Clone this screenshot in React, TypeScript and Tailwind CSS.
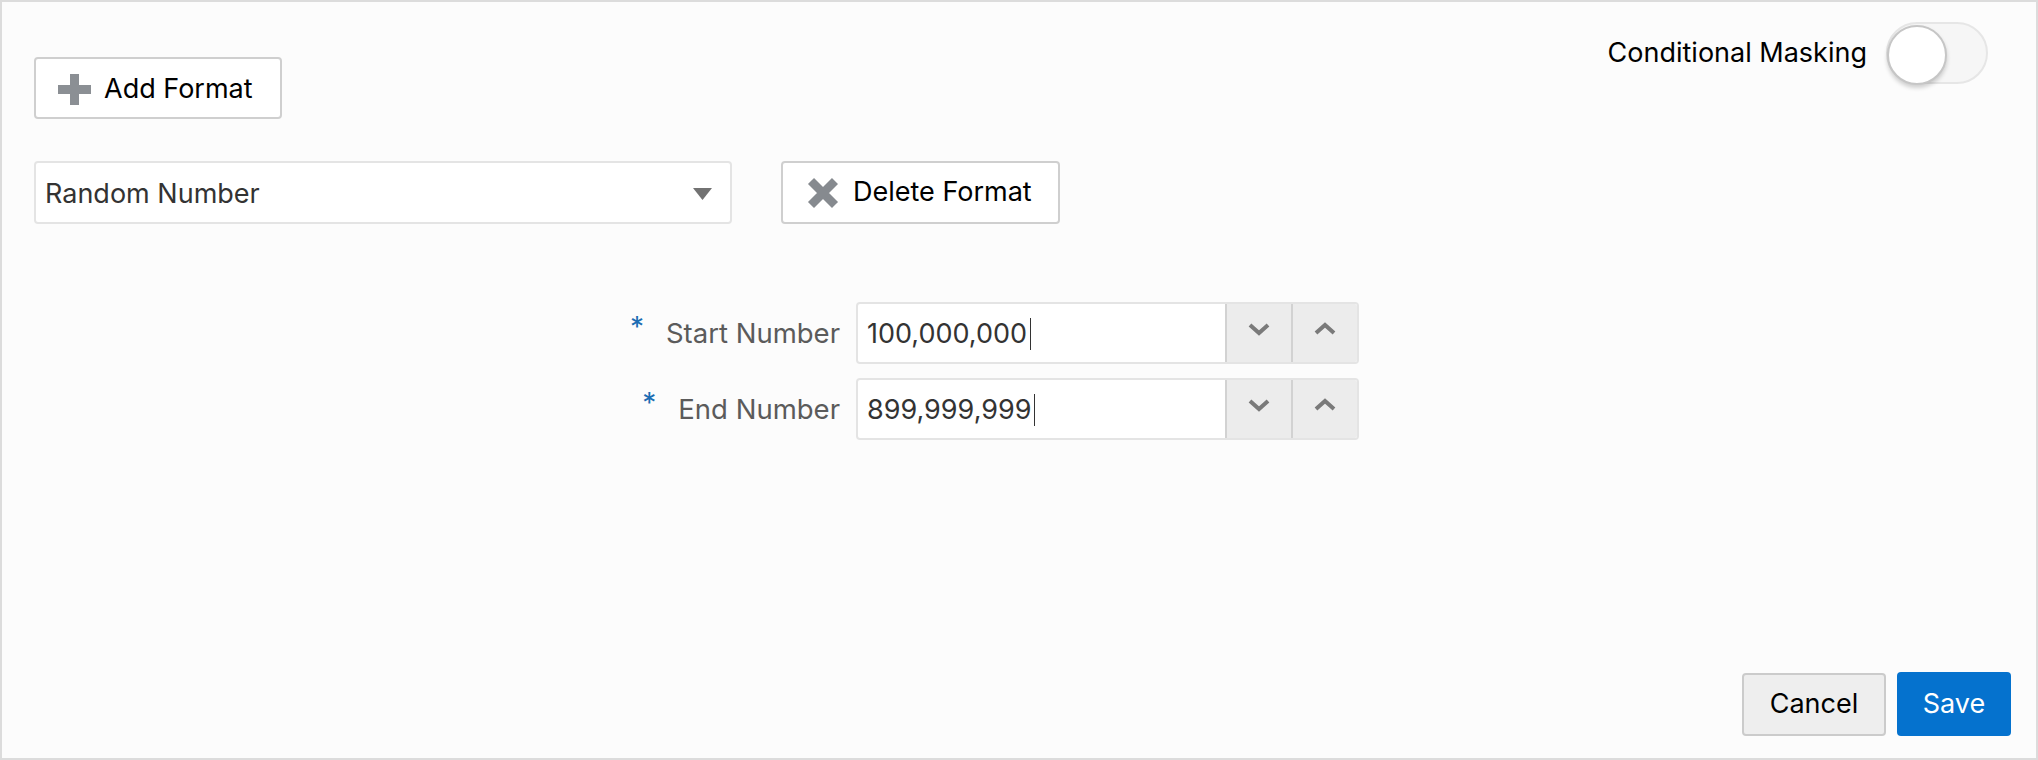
import React from 'react';

const font = "font-['Inter','Liberation_Sans',sans-serif]";

function PlusIcon() {
    return (
        <svg width="33" height="31" viewBox="0 0 33 31" className="shrink-0">
            <rect x="12" y="0" width="9" height="31" fill="#8b8f94" />
            <rect x="0" y="11" width="33" height="9" fill="#8b8f94" />
        </svg>
    );
}

function CrossIcon() {
    return (
        <svg width="32" height="32" viewBox="0 0 32 32" className="shrink-0">
            <path d="M4 4 L28 28 M28 4 L4 28" stroke="#868a8f" strokeWidth="8.5" />
        </svg>
    );
}

function Chevron({ up }: { up?: boolean }) {
    return (
        <svg width="22" height="13" viewBox="0 0 22 13">
            <polyline
                points={up ? '2,11 11,3 20,11' : '2,2 11,10 20,2'}
                fill="none"
                stroke="#7a7a7a"
                strokeWidth="4"
            />
        </svg>
    );
}

function NumberField({ label, value }: { label: string; value: string }) {
    return (
        <div className="flex items-center">
            <div className="w-[854px] flex items-baseline justify-end pr-[16px]">
                <span className="text-[28px] text-[#1c6db3] relative -top-[6px] mr-[22px]">*</span>
                <span className="text-[27.5px] text-[#5b5b5b]">{label}</span>
            </div>
            <div className="w-[503px] h-[62px] flex border-2 border-[#e4e4e4] rounded-[4px] bg-white overflow-hidden">
                <div className="flex-1 flex items-center pl-[9px] pt-[2px] text-[27px] text-[#333333]">
                    <span>{value}</span>
                    <span className="ml-[3px] w-px h-[32px] bg-[#333333]" />
                </div>
                <div className="w-[66px] flex items-center justify-center bg-[#ececec] border-l-2 border-[#d2d2d2] pb-[8px]">
                    <Chevron />
                </div>
                <div className="w-[66px] flex items-center justify-center bg-[#ececec] border-l-2 border-[#d2d2d2] pb-[10px]">
                    <Chevron up />
                </div>
            </div>
        </div>
    );
}

export default function App() {
    return (
        <div className={`w-[2038px] h-[760px] border-2 border-[#dcdcdc] bg-[#fcfcfc] flex flex-col ${font}`}>
            {/* Top row */}
            <div className="flex justify-between items-start pl-[32px] pr-[48px] pt-[20px]">
                <button className="mt-[35px] w-[248px] h-[62px] flex items-center gap-[13px] pl-[22px] pt-[2px] bg-white border-2 border-[#cfcfcf] rounded-[4px] text-[27px] text-black">
                    <PlusIcon />
                    <span>Add Format</span>
                </button>
                <div className="flex items-center gap-[19px]">
                    <span className="text-[27px] text-black">Conditional Masking</span>
                    <div className="relative w-[102px] h-[62px] rounded-full border-2 border-[#e6e6e6] bg-[#f6f6f6]">
                        <div className="absolute left-[-1px] top-[1px] w-[60px] h-[60px] rounded-full bg-white border-2 border-[#c6c6c6] shadow-[0_3px_4px_rgba(0,0,0,0.18)]" />
                    </div>
                </div>
            </div>

            {/* Format select row */}
            <div className="flex items-center gap-[49px] pl-[32px] mt-[42px]">
                <div className="w-[698px] h-[63px] flex items-center justify-between pl-[9px] pr-[18px] pt-[3px] bg-white border-2 border-[#e4e4e4] rounded-[4px]">
                    <span className="text-[27px] text-[#333333]">Random Number</span>
                    <svg width="19" height="12" viewBox="0 0 19 12">
                        <polygon points="0,0 19,0 9.5,12" fill="#727272" />
                    </svg>
                </div>
                <button className="w-[279px] h-[63px] flex items-center gap-[14px] pl-[24px] bg-white border-2 border-[#cfcfcf] rounded-[4px] text-[27px] text-black">
                    <CrossIcon />
                    <span>Delete Format</span>
                </button>
            </div>

            {/* Number range */}
            <div className="mt-[78px] flex flex-col gap-[14px]">
                <NumberField label="Start Number" value="100,000,000" />
                <NumberField label="End Number" value="899,999,999" />
            </div>

            {/* Footer */}
            <div className="mt-auto flex justify-end items-center gap-[11px] pr-[25px] pb-[22px]">
                <button className="w-[144px] h-[63px] bg-[#eeeeee] border-2 border-[#cbcbcb] rounded-[4px] text-[27px] text-black">
                    Cancel
                </button>
                <button className="w-[114px] h-[64px] bg-[#0572ce] rounded-[4px] text-[27px] text-white">
                    Save
                </button>
            </div>
        </div>
    );
}
